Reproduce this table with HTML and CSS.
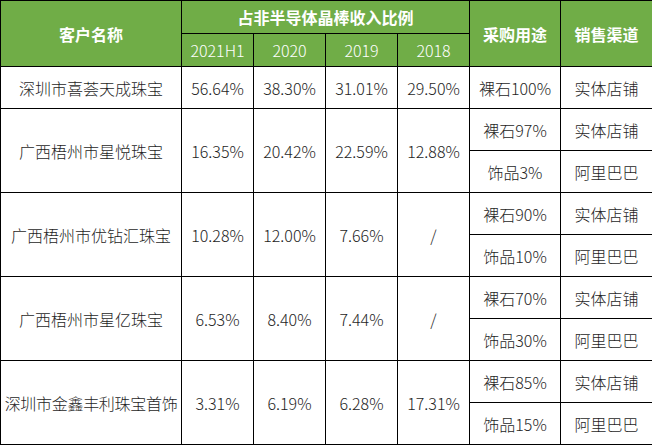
FILE: index.html
```html
<!DOCTYPE html>
<html lang="zh-CN">
<head>
<meta charset="utf-8">
<title>客户情况</title>
<link rel="stylesheet" href="styles.css">
</head>
<body>
<table class="sheet">
  <colgroup>
    <col class="c-name">
    <col class="c-pct"><col class="c-pct"><col class="c-pct"><col class="c-pct">
    <col class="c-use">
    <col class="c-chan">
  </colgroup>
  <thead>
    <tr class="hrow">
      <th rowspan="2">客户名称</th>
      <th colspan="4">占非半导体晶棒收入比例</th>
      <th rowspan="2">采购用途</th>
      <th rowspan="2">销售渠道</th>
    </tr>
    <tr class="hrow">
      <th class="year">2021H1</th>
      <th class="year">2020</th>
      <th class="year">2019</th>
      <th class="year">2018</th>
    </tr>
  </thead>
  <tbody>
    <tr class="brow">
      <td>深圳市喜荟天成珠宝</td>
      <td>56.64%</td><td>38.30%</td><td>31.01%</td><td>29.50%</td>
      <td>裸石100%</td><td>实体店铺</td>
    </tr>
    <tr class="brow">
      <td rowspan="2">广西梧州市星悦珠宝</td>
      <td rowspan="2">16.35%</td><td rowspan="2">20.42%</td><td rowspan="2">22.59%</td><td rowspan="2">12.88%</td>
      <td>裸石97%</td><td>实体店铺</td>
    </tr>
    <tr class="brow"><td>饰品3%</td><td>阿里巴巴</td></tr>
    <tr class="brow">
      <td rowspan="2">广西梧州市优钻汇珠宝</td>
      <td rowspan="2">10.28%</td><td rowspan="2">12.00%</td><td rowspan="2">7.66%</td><td rowspan="2">/</td>
      <td>裸石90%</td><td>实体店铺</td>
    </tr>
    <tr class="brow"><td>饰品10%</td><td>阿里巴巴</td></tr>
    <tr class="brow">
      <td rowspan="2">广西梧州市星亿珠宝</td>
      <td rowspan="2">6.53%</td><td rowspan="2">8.40%</td><td rowspan="2">7.44%</td><td rowspan="2">/</td>
      <td>裸石70%</td><td>实体店铺</td>
    </tr>
    <tr class="brow"><td>饰品30%</td><td>阿里巴巴</td></tr>
    <tr class="brow">
      <td rowspan="2" class="tight">深圳市金鑫丰利珠宝首饰</td>
      <td rowspan="2">3.31%</td><td rowspan="2">6.19%</td><td rowspan="2">6.28%</td><td rowspan="2">17.31%</td>
      <td>裸石85%</td><td>实体店铺</td>
    </tr>
    <tr class="brow"><td>饰品15%</td><td>阿里巴巴</td></tr>
  </tbody>
</table>
</body>
</html>
```

FILE: styles.css
```css
html, body {
  margin: 0;
  padding: 0;
  background: #ffffff;
}

.sheet {
  border-collapse: collapse;
  table-layout: fixed;
  width: 652px;
  font-family: "Noto Sans CJK SC", "Noto Sans", sans-serif;
  font-size: 16px;
  color: #1e1e1e;
}

.c-name { width: 181px; }
.c-pct { width: 72px; }
.c-use { width: 91px; }
.c-chan { width: 92px; }

.sheet th,
.sheet td {
  border: 1px solid #000;
  padding: 0;
  text-align: center;
  vertical-align: middle;
  line-height: 20px;
  white-space: nowrap;
  overflow: hidden;
}

.sheet th {
  background: #70ad47;
  color: #ffffff;
  font-weight: 700;
}

.hrow { height: 33px; }

.sheet th.year {
  font-weight: 300;
}

.brow { height: 42px; }

.sheet td {
  font-weight: 300;
}

.sheet td.tight {
  letter-spacing: -0.3px;
}
```
